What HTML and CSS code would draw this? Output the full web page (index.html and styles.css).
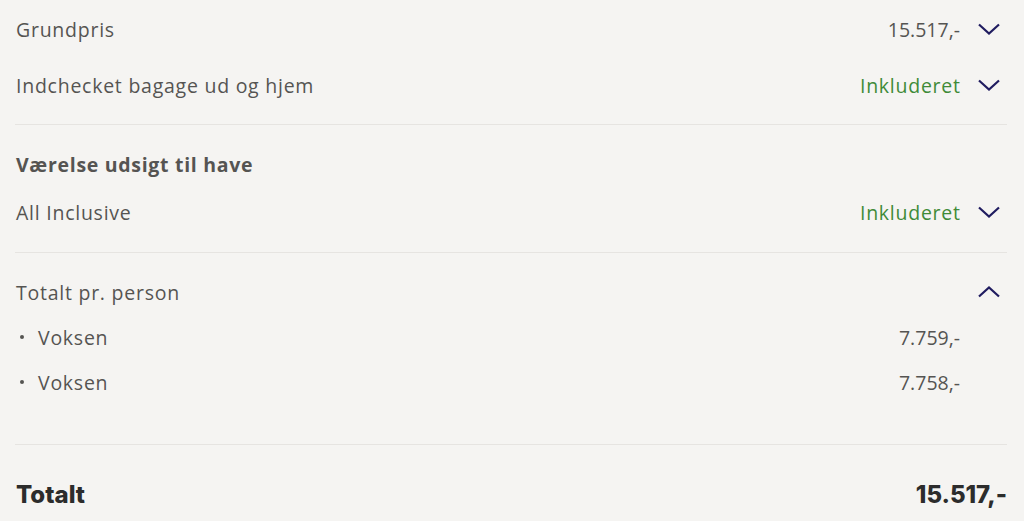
FILE: index.html
```html
<!DOCTYPE html>
<html lang="da">
<head>
<meta charset="utf-8">
<link rel="stylesheet" href="styles.css">
</head>
<body>
<div class="summary">
  <section class="group g1">
    <div class="row">
      <span class="label">Grundpris</span>
      <span class="value num">15.517,-</span>
      <span class="toggle"><svg viewBox="0 0 24 12" width="24" height="12"><path d="M2 1.5 L12 10.5 L22 1.5" fill="none" stroke="currentColor" stroke-width="2.2"/></svg></span>
    </div>
    <div class="row">
      <span class="label">Indchecket bagage ud og hjem</span>
      <span class="value incl">Inkluderet</span>
      <span class="toggle"><svg viewBox="0 0 24 12" width="24" height="12"><path d="M2 1.5 L12 10.5 L22 1.5" fill="none" stroke="currentColor" stroke-width="2.2"/></svg></span>
    </div>
  </section>
  <section class="group g2">
    <div class="row heading"><span class="label">Værelse udsigt til have</span></div>
    <div class="row">
      <span class="label">All Inclusive</span>
      <span class="value incl">Inkluderet</span>
      <span class="toggle"><svg viewBox="0 0 24 12" width="24" height="12"><path d="M2 1.5 L12 10.5 L22 1.5" fill="none" stroke="currentColor" stroke-width="2.2"/></svg></span>
    </div>
  </section>
  <section class="group g3">
    <div class="row">
      <span class="label">Totalt pr. person</span>
      <span class="toggle"><svg viewBox="0 0 24 12" width="24" height="12"><path d="M2 10.5 L12 1.5 L22 10.5" fill="none" stroke="currentColor" stroke-width="2.2"/></svg></span>
    </div>
    <ul class="persons">
      <li class="row sub"><span class="label">Voksen</span><span class="value num">7.759,-</span><span class="toggle"></span></li>
      <li class="row sub"><span class="label">Voksen</span><span class="value num">7.758,-</span><span class="toggle"></span></li>
    </ul>
  </section>
  <section class="total">
    <span class="total-label">Totalt</span>
    <span class="total-value">15.517,-</span>
  </section>
</div>
</body>
</html>
```
FILE: styles.css
```css
html, body {
  margin: 0;
  padding: 0;
  background: #f5f4f2;
}
body {
  font-family: "Open Sans", "Liberation Sans", sans-serif;
  color: #555452;
}
.summary {
  padding: 0 17px 0 15px;
}
.group {
  border-bottom: 1px solid #e6e4e1;
  display: flex;
  flex-direction: column;
}
.g1 { padding: 9px 0 19px; gap: 16px; }
.g2 { padding: 19px 0 20px; gap: 8px; }
.g3 { padding: 19px 0 42px; gap: 5px; }
.row {
  height: 40px;
  display: flex;
  align-items: center;
  font-size: 19.5px;
  letter-spacing: 0.75px;
  padding-left: 1px;
}
.label { flex: 1; }
.heading .label { font-weight: 700; letter-spacing: 0.7px; }
.value { text-align: right; margin-right: -0.75px; }
.num { letter-spacing: 0; margin-right: 0; }
.incl { color: #3f8b38; }
.toggle {
  width: 47px;
  display: flex;
  justify-content: flex-start;
  padding-left: 17px;
  box-sizing: border-box;
  color: #201c60;
}
.toggle svg { display: block; }
.persons {
  list-style: none;
  margin: 0;
  padding: 0;
  display: flex;
  flex-direction: column;
  gap: 5px;
}
.sub .label::before {
  content: "";
  display: inline-block;
  width: 4px;
  height: 4px;
  border-radius: 50%;
  background: #555452;
  margin: 0 14px 4px 4px;
  vertical-align: middle;
}
.total {
  display: flex;
  align-items: center;
  justify-content: space-between;
  height: 40px;
  margin-top: 29px;
  padding-left: 1px;
  font-family: "Inter", "Liberation Sans", sans-serif;
  font-weight: 800;
  font-size: 24px;
  color: #2c2c2c;
}
```
